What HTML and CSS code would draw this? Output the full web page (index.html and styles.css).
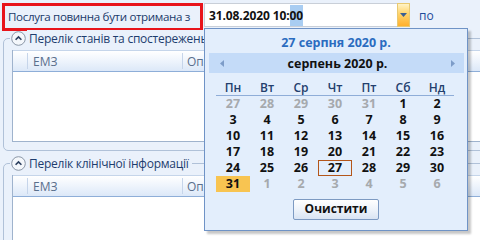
FILE: index.html
```html
<!DOCTYPE html>
<html lang="uk">
<head>
<meta charset="utf-8">
<link rel="stylesheet" href="styles.css">
</head>
<body>
<div class="page">
  <div class="toprow">
    <div class="label">Послуга повинна бути отримана з</div>
    <div class="dateinput">
      <span class="val">31.08.2020 10:<span class="sel">00</span></span>
      <div class="ddbtn"><svg width="7" height="4" viewBox="0 0 7 4"><path d="M0 0H7L3.5 4Z" fill="#3a5f94"/></svg></div>
    </div>
    <div class="po">по</div>
  </div>

  <div class="group g1">
    <div class="gtitle">
      <span class="chev"><svg width="15" height="15" viewBox="0 0 15 15"><circle cx="7.5" cy="7.5" r="6.8" fill="#f4f7fb" stroke="#8a96a6" stroke-width="1"/><path d="M4.6 8.8L7.5 5.9L10.4 8.8" fill="none" stroke="#2b3f5e" stroke-width="1.6"/></svg></span>
      <span class="gtext">Перелік станів та спостережень</span>
    </div>
    <div class="grid">
      <div class="ghead"><div class="c0"></div><div class="c1">ЕМЗ</div><div class="c2">Опис</div></div>
      <div class="gbody b1"></div>
    </div>
  </div>

  <div class="group g2">
    <div class="gtitle">
      <span class="chev"><svg width="15" height="15" viewBox="0 0 15 15"><circle cx="7.5" cy="7.5" r="6.8" fill="#f4f7fb" stroke="#8a96a6" stroke-width="1"/><path d="M4.6 8.8L7.5 5.9L10.4 8.8" fill="none" stroke="#2b3f5e" stroke-width="1.6"/></svg></span>
      <span class="gtext">Перелік клінічної інформації</span>
    </div>
    <div class="grid">
      <div class="ghead"><div class="c0"></div><div class="c1">ЕМЗ</div><div class="c2">Опис</div></div>
      <div class="gbody b2"></div>
    </div>
  </div>

  <div class="popup">
    <div class="ptitle">27 серпня 2020 р.</div>
    <div class="nav">
      <svg width="4" height="7" viewBox="0 0 4 7"><path d="M4 0V7L0 3.5Z" fill="#7d9cc8"/></svg>
      <span class="month">серпень 2020 р.</span>
      <svg width="4" height="7" viewBox="0 0 4 7"><path d="M0 0V7L4 3.5Z" fill="#7d9cc8"/></svg>
    </div>
    <div class="days">
      <div class="dh">Пн</div><div class="dh">Вт</div><div class="dh">Ср</div><div class="dh">Чт</div><div class="dh">Пт</div><div class="dh">Сб</div><div class="dh">Нд</div>
      <div class="d o first">27</div><div class="d o">28</div><div class="d o">29</div><div class="d o">30</div><div class="d o">31</div><div class="d">1</div><div class="d">2</div>
      <div class="d">3</div><div class="d">4</div><div class="d">5</div><div class="d">6</div><div class="d">7</div><div class="d">8</div><div class="d">9</div>
      <div class="d">10</div><div class="d">11</div><div class="d">12</div><div class="d">13</div><div class="d">14</div><div class="d">15</div><div class="d">16</div>
      <div class="d">17</div><div class="d">18</div><div class="d">19</div><div class="d">20</div><div class="d">21</div><div class="d">22</div><div class="d">23</div>
      <div class="d">24</div><div class="d">25</div><div class="d">26</div><div class="d today">27</div><div class="d">28</div><div class="d">29</div><div class="d">30</div>
      <div class="d sel31">31</div><div class="d o">1</div><div class="d o">2</div><div class="d o">3</div><div class="d o">4</div><div class="d o">5</div><div class="d o">6</div>
    </div>
    <div class="btnrow"><div class="clear">Очистити</div></div>
  </div>
</div>
</body>
</html>
```

FILE: styles.css
```css
* { box-sizing: border-box; }
html, body { margin: 0; padding: 0; }
body {
  width: 480px;
  height: 240px;
  overflow: hidden;
  background: #eaf1fb;
  font-family: "Open Sans", "Noto Sans", sans-serif;
  font-size: 12px;
  color: #1e3a5f;
}
.page {
  position: relative;
  width: 480px;
  height: 240px;
  overflow: hidden;
}
.toprow {
  display: flex;
  align-items: flex-start;
  padding: 3px 0 0 2px;
  height: 31px;
}
.label {
  width: 201px;
  height: 28px;
  border: 3px solid #e8141b;
  padding: 3px 0 0 3px;
  color: #1a3a6a;
  white-space: nowrap;
  font-size: 11.6px;
  letter-spacing: -0.35px;
}
.dateinput {
  margin-left: 1px;
  width: 206px;
  height: 24px;
  border: 1px solid #c9cfd8;
  border-right: none;
  background: #fff;
  display: flex;
  align-items: center;
  padding-left: 4px;
  position: relative;
}
.val {
  font-weight: 700;
  color: #111;
  flex: 1;
  letter-spacing: -0.1px;
}
.sel { background: #a9cdf2; padding: 2px 0; }
.ddbtn {
  width: 13px;
  height: 24px;
  margin-top: -1px;
  margin-bottom: -1px;
  border: 1px solid #e8c971;
  background: linear-gradient(#fff3c6 0%, #ffd36a 45%, #ffb02e 100%);
  display: flex;
  align-items: center;
  justify-content: center;
}
.po {
  margin-left: 9px;
  padding-top: 4px;
  color: #1e4c9a;
}

.group {
  margin-left: 3px;
  width: 520px;
  border: 1px solid #b0c1d8;
  border-radius: 5px;
  padding: 0 0 0 8px;
}
.g1 { margin-top: 7px; height: 113px; }
.g2 { margin-top: 12px; height: 100px; }
.gtitle {
  display: flex;
  align-items: center;
  height: 15px;
  margin-top: -8px;
  margin-left: -2px;
}
.chev, .gtext { background: #eaf1fb; }
.chev { display: flex; padding: 0 1px; }
.gtext { padding: 0 3px 0 2px; color: #1e3d6e; white-space: nowrap; letter-spacing: -0.25px; }
.grid {
  margin-top: 4px;
  border-left: 1px solid #9fb3cd;
  background: #fff;
}
.ghead {
  display: flex;
  height: 22px;
  background: linear-gradient(#ffffff 0%, #eef4fc 50%, #dce8f8 100%);
  border-top: 1px solid #c5d5ea;
  border-bottom: 1px solid #8eaed8;
  color: #5a6f8c;
}
.ghead > div {
  display: flex;
  align-items: center;
  border-right: 1px solid #c6d5ea;
  margin: 2px 0;
}
.c0 { width: 15px; }
.c1 { width: 155px; padding-left: 5px; }
.c2 { width: 200px; padding-left: 4px; border-right: none !important; }
.b1 { height: 70px; border-bottom: 1px solid #9fb3cd; }
.b2 { height: 60px; }

.popup {
  position: absolute;
  left: 204px;
  top: 28px;
  width: 264px;
  height: 203px;
  background: #e3eefc;
  border: 1px solid #6f93c6;
  box-shadow: 3px 3px 2px rgba(0,0,0,0.22);
}
.ptitle {
  text-align: center;
  font-weight: 700;
  color: #2b6cc0;
  font-size: 12.5px;
  padding-top: 5px;
  height: 24px;
}
.nav {
  margin: 0 3px 0 4px;
  height: 20px;
  background: #c4dbf8;
  display: flex;
  align-items: center;
  justify-content: space-between;
  padding: 0 9px 0 11px;
}
.month { font-weight: 700; color: #111; font-size: 12.5px; }
.days {
  display: grid;
  grid-template-columns: repeat(7, 34px);
  grid-auto-rows: 16px;
  margin: 7px 0 0 11px;
  width: 238px;
}
.dh {
  text-align: center;
  font-weight: 600;
  color: #233f6d;
  height: 16px;
  line-height: 16px;
  border-bottom: 1px solid #8fadd8;
  margin-bottom: 7px;
}
.days .d {
  text-align: center;
  font-weight: 700;
  color: #111;
  line-height: 16px;
  font-size: 12.5px;
}
.days .first { grid-row: 2; }
.days .o { color: #a6a9ad; }
.days .today { border: 1px solid #b4561a; line-height: 14px; }
.days .sel31 { background: #f8c451; }
.btnrow {
  display: flex;
  justify-content: center;
  margin-top: 7px;
}
.clear {
  width: 86px;
  height: 21px;
  border: 1px solid #7d9ac2;
  border-radius: 2px;
  background: linear-gradient(#ffffff 0%, #eef3fa 50%, #d9e4f3 100%);
  text-align: center;
  font-weight: 700;
  color: #111;
  line-height: 18px;
  font-size: 12px;
}
```
